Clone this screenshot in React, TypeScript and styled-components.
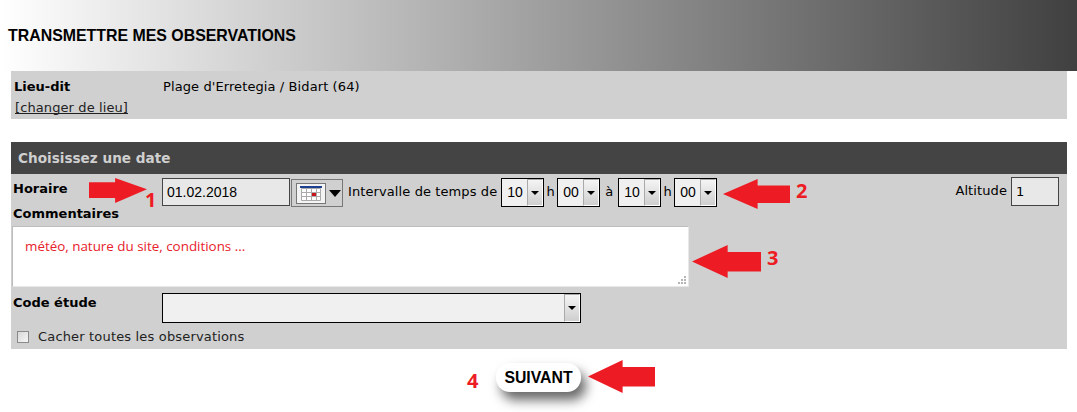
import styled, { createGlobalStyle } from "styled-components";

const GlobalStyle = createGlobalStyle`
  html, body {
    margin: 0;
    padding: 0;
    background: #fff;
  }
  body {
    font-family: "DejaVu Sans", Verdana, sans-serif;
    font-size: 13px;
    letter-spacing: 0.1px;
    color: #000;
  }
`;

interface ArrowProps {
  $left: number;
  $top: number;
  $w: number;
  $h: number;
  flip?: boolean;
}

const RedArrow = ({ $left, $top, $w, $h, flip }: ArrowProps) => (
  <ArrowSvg $left={$left} $top={$top} $w={$w} $h={$h} viewBox="0 0 60 30" preserveAspectRatio="none">
    <path
      d={
        flip
          ? "M0 15 L31 0 L31 6.4 L60 6.4 L60 24 L31 24 L31 30 Z"
          : "M60 13.5 L27 0 L27 5 L0 5 L0 24 L27 24 L27 30 Z"
      }
      fill="#ed1c24"
    />
  </ArrowSvg>
);

const SelectBox = ({ value, wide }: { value?: string; wide?: boolean }) => (
  <Select $wide={wide}>
    <SelectValue>{value}</SelectValue>
    <SelectButton>
      <Caret />
    </SelectButton>
  </Select>
);

export default function App() {
  return (
    <Page>
      <GlobalStyle />
      <Banner>
        <h1>TRANSMETTRE MES OBSERVATIONS</h1>
      </Banner>

      <InfoPanel>
        <InfoRow>
          <Label>Lieu-dit</Label>
          <span>Plage d'Erretegia / Bidart (64)</span>
        </InfoRow>
        <ChangeLink href="#">[changer de lieu]</ChangeLink>
      </InfoPanel>

      <FormPanel>
        <PanelTitle>Choisissez une date</PanelTitle>
        <TimeRow>
          <Label>Horaire</Label>
          <DateInput defaultValue="01.02.2018" readOnly />
          <CalendarButton>
            <svg width="30" height="21" viewBox="0 0 30 21">
              <rect x="0.5" y="0.5" width="29" height="20" fill="#f4f4f4" stroke="#777" />
              <rect x="4" y="3" width="22" height="2" fill="#1f3f8f" />
              <path
                d="M5.5 5.5h19v12h-19zM5.5 9.5h19M5.5 13.5h19M10.5 5.5v12M15.5 5.5v12M20.5 5.5v12"
                fill="#fff"
                stroke="#aaa"
              />
              <rect x="16" y="10" width="4" height="3" fill="#c8141c" />
            </svg>
            <CalendarCaret />
          </CalendarButton>
          <TimeText>Intervalle de temps de</TimeText>
          <SelectBox value="10" />
          <Unit>h</Unit>
          <SelectBox value="00" />
          <ToText>à</ToText>
          <SelectBox value="10" />
          <Unit>h</Unit>
          <SelectBox value="00" />
          <Altitude>
            Altitude
            <AltitudeInput defaultValue="1" readOnly />
          </Altitude>
        </TimeRow>
        <CommentLabel>Commentaires</CommentLabel>
        <Comment defaultValue="météo, nature du site, conditions ..." />
        <CodeRow>
          <Label>Code étude</Label>
          <SelectBox wide />
        </CodeRow>
        <CheckRow>
          <Check />
          Cacher toutes les observations
        </CheckRow>
      </FormPanel>

      <Footer>
        <NextButton>SUIVANT</NextButton>
      </Footer>

      <RedArrow $left={89} $top={178} $w={58} $h={25} />
      <RedArrow $left={723} $top={179} $w={67} $h={30} flip />
      <RedArrow $left={692} $top={245} $w={69} $h={33} flip />
      <RedArrow $left={588} $top={360} $w={67} $h={33} flip />
      <Mark $left={145} $top={187}>1</Mark>
      <Mark $left={796} $top={178}>2</Mark>
      <Mark $left={767} $top={245}>3</Mark>
      <Mark $left={467} $top={368}>4</Mark>
    </Page>
  );
}

const Page = styled.div`
  position: relative;
  width: 1077px;
  height: 412px;
  overflow: hidden;
`;

const Banner = styled.div`
  height: 71px;
  display: flex;
  align-items: center;
  padding-left: 8px;
  background: linear-gradient(to right, #ffffff 0%, #404040 100%);

  h1 {
    margin: 0;
    font-family: "Liberation Sans", Arial, sans-serif;
    font-size: 15.9px;
    letter-spacing: 0;
    font-weight: bold;
    color: #000;
  }
`;

const InfoPanel = styled.div`
  width: 1056px;
  height: 48px;
  margin-left: 11px;
  padding: 5px 0 0 3px;
  box-sizing: border-box;
  background: #d0d0d0;
`;

const InfoRow = styled.div`
  display: flex;
  height: 20px;
  align-items: center;
`;

const Label = styled.div`
  flex: 0 0 149px;
  font-weight: bold;
  letter-spacing: 0;
  color: #000;
`;

const ChangeLink = styled.a`
  display: inline-block;
  margin: 4px 0 0 1px;
  color: #222;
  text-decoration: underline;
  text-decoration-skip-ink: none;
`;

const FormPanel = styled.div`
  width: 1056px;
  height: 207px;
  margin: 23px 0 0 11px;
  background: #d0d0d0;
`;

const PanelTitle = styled.div`
  height: 32px;
  display: flex;
  align-items: center;
  padding-left: 7px;
  background: #444444;
  color: #cfcfcf;
  font-size: 13.6px;
  letter-spacing: 0;
  font-weight: bold;
`;

const TimeRow = styled.div`
  display: flex;
  align-items: flex-start;
  height: 33px;
  padding: 3px 8px 0 2px;
  box-sizing: border-box;

  ${Label} {
    line-height: 22px;
    margin-top: 1px;
  }
`;

const DateInput = styled.input`
  width: 128px;
  height: 28px;
  box-sizing: border-box;
  padding: 0 4px;
  margin: 1px 0 0;
  border: 1px solid #444;
  background: #e8e8e8;
  font-family: "Liberation Sans", Arial, sans-serif;
  font-size: 14px;
  color: #000;
  outline: none;
`;

const CalendarButton = styled.div`
  display: flex;
  align-items: center;
  gap: 3px;
  width: 52px;
  height: 28px;
  margin: 2px 0 0 1px;
  padding-left: 4px;
  box-sizing: border-box;
  border: 1px solid #777;

  svg {
    flex: none;
  }
`;

const CalendarCaret = styled.span`
  border-left: 6px solid transparent;
  border-right: 6px solid transparent;
  border-top: 7px solid #000;
`;

const TimeText = styled.span`
  margin: 0 4px 0 5px;
  line-height: 30px;
`;

const Unit = styled.span`
  width: 13px;
  line-height: 30px;
  text-align: center;
`;

const ToText = styled.span`
  width: 18px;
  line-height: 30px;
  text-align: center;
`;

const Select = styled.div<{ $wide?: boolean }>`
  display: flex;
  width: ${(p) => (p.$wide ? "419px" : "43px")};
  height: ${(p) => (p.$wide ? "30px" : "29px")};
  margin-top: ${(p) => (p.$wide ? "0" : "1px")};
  box-sizing: border-box;
  border: 1px solid #000;
  background: #f0f0f0;
`;

const SelectValue = styled.span`
  flex: 1;
  padding-left: 5px;
  font-family: "Liberation Sans", Arial, sans-serif;
  font-size: 14px;
  letter-spacing: 0;
  line-height: 27px;
`;

const SelectButton = styled.span`
  flex: 0 0 16px;
  display: flex;
  align-items: center;
  justify-content: center;
  box-sizing: border-box;
  border: 1px solid #aaa;
  border-right-color: #fff;
  border-bottom-color: #fff;
  background: linear-gradient(to bottom, #f4f4f4, #cfcfcf);
`;

const Caret = styled.span`
  border-left: 4px solid transparent;
  border-right: 4px solid transparent;
  border-top: 4px solid #000;
`;

const Altitude = styled.div`
  display: flex;
  align-items: flex-start;
  gap: 4px;
  margin-left: auto;
  line-height: 28px;
`;

const AltitudeInput = styled.input`
  width: 48px;
  height: 29px;
  box-sizing: border-box;
  padding: 0 4px;
  margin: 0;
  border: 1px solid #444;
  background: #e8e8e8;
  font-family: "DejaVu Sans", Verdana, sans-serif;
  font-size: 13px;
  outline: none;
`;

const CommentLabel = styled.div`
  height: 19px;
  padding-left: 2px;
  font-weight: bold;
  letter-spacing: 0;
  line-height: 14px;
`;

const Comment = styled.textarea`
  display: block;
  width: 677px;
  height: 61px;
  margin: 0 0 0 1px;
  box-sizing: border-box;
  padding: 10px 12px;
  border: 1px solid #bdbdbd;
  border-right-color: #e8e8e8;
  border-bottom-color: #e8e8e8;
  background: #fff;
  color: #e8212b;
  font-family: "Open Sans", sans-serif;
  font-size: 13.4px;
  letter-spacing: 0;
  outline: none;

  &::-webkit-resizer {
    background: url("data:image/svg+xml,%3Csvg xmlns='http://www.w3.org/2000/svg' width='15' height='15'%3E%3Cpath d='M11 5h2v2h-2zM8 8h2v2H8zM11 8h2v2h-2zM5 11h2v2H5zM8 11h2v2H8zM11 11h2v2h-2z' fill='%23b5b5b5'/%3E%3C/svg%3E");
  }
`;

const CodeRow = styled.div`
  display: flex;
  align-items: flex-start;
  height: 36px;
  padding: 6px 0 0 2px;
  box-sizing: border-box;

  ${Label} {
    line-height: 20px;
  }
`;

const CheckRow = styled.div`
  display: flex;
  align-items: center;
  gap: 9px;
  height: 27px;
  padding: 0 0 0 6px;
  letter-spacing: 0.17px;
  color: #222;
`;

const Check = styled.span`
  width: 12px;
  height: 12px;
  box-sizing: border-box;
  border: 1px solid #8a8a8a;
  background: linear-gradient(135deg, #d8d8d8, #f6f6f6);
`;

const Footer = styled.div`
  display: flex;
  padding: 14px 0 0 496px;
`;

const NextButton = styled.button`
  width: 85px;
  height: 29px;
  padding: 0;
  border: none;
  border-radius: 14px;
  background: #fff;
  box-shadow: 5px 8px 12px rgba(0, 0, 0, 0.6);
  font-family: "Liberation Sans", Arial, sans-serif;
  font-size: 15.8px;
  font-weight: bold;
  color: #000;
`;

const ArrowSvg = styled.svg<{ $left: number; $top: number; $w: number; $h: number }>`
  position: absolute;
  left: ${(p) => p.$left}px;
  top: ${(p) => p.$top}px;
  width: ${(p) => p.$w}px;
  height: ${(p) => p.$h}px;
`;

const Mark = styled.span<{ $left: number; $top: number }>`
  position: absolute;
  left: ${(p) => p.$left}px;
  top: ${(p) => p.$top}px;
  font-family: "Open Sans", sans-serif;
  font-size: 20px;
  font-weight: bold;
  line-height: 26px;
  color: #ed1c24;
`;
